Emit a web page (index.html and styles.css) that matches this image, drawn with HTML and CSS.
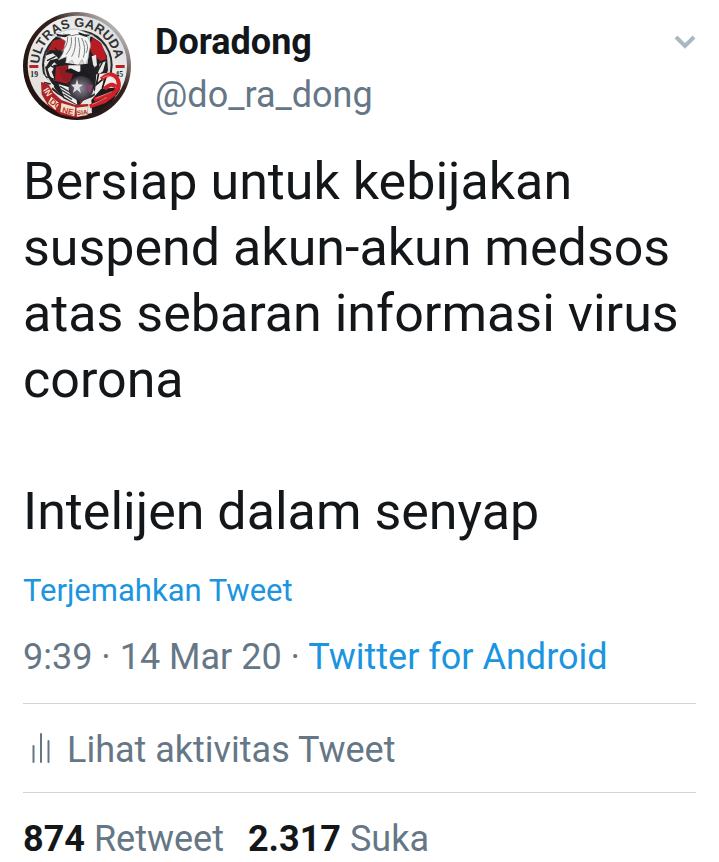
FILE: index.html
```html
<!DOCTYPE html>
<html lang="id">
<head>
<meta charset="utf-8">
<meta name="viewport" content="width=device-width, initial-scale=1">
<title>Tweet</title>
<link rel="stylesheet" href="styles.css">
</head>
<body>
<article class="tweet">
  <header class="header">
    <svg class="avatar" viewBox="24 21 324 324" role="img" aria-label="Doradong">
      <defs>
        <linearGradient id="rim" x1="0" y1="1" x2="1" y2="0">
          <stop offset="0" stop-color="#1c0f0d"/>
          <stop offset=".62" stop-color="#33211e"/>
          <stop offset=".85" stop-color="#b5b0ae"/>
          <stop offset="1" stop-color="#f2f2f2"/>
        </linearGradient>
        <linearGradient id="ring" x1="0" y1="1" x2="1" y2="0">
          <stop offset="0" stop-color="#dedbd5"/>
          <stop offset=".6" stop-color="#efeeec"/>
          <stop offset="1" stop-color="#d4d6d7"/>
        </linearGradient>
        <radialGradient id="ball">
          <stop offset="0" stop-color="#8b8790"/>
          <stop offset="1" stop-color="#35313a"/>
        </radialGradient>
        <path id="arc-top" d="M73 180A114 114 0 0 1 301 180"/>
      </defs>
      <circle cx="186" cy="183" r="162" fill="url(#rim)"/>
      <circle cx="187" cy="181" r="149" fill="url(#ring)"/>
      <circle cx="187" cy="180" r="106" fill="#29292b"/>
      <circle cx="187" cy="180" r="100" fill="#d5d6d5"/>
      <text class="badge-title" fill="#303236"><textPath href="#arc-top" startOffset="3">ULTRAS GARUDA</textPath></text>
      <path fill="#b92325" d="M43 180h27v9H43zM302 180h27v9h-27z"/>
      <text class="badge-year" x="46" y="215">19</text>
      <text class="badge-year" x="301" y="215">45</text>
      <!-- wings -->
      <path fill="#222225" d="M150 80l-35 23-18 32-10 37 9 39 26 43 21 21 20-75-10-42 12-44zM226 92l29 19 21 42 3 43-15 40-27 23-21-64z"/>
      <path fill="#ad1f23" d="M113 107l33-7 11 12-14 25-37-2-10 8z"/>
      <path fill="#b81c22" d="M233 98l26 17 17 46-19 7-25-21-9-20z"/>
      <path fill="#e9e9e8" d="M94 151l20-6 16 15-25 6-13 21-5-12zM98 192l20-20 8 7-16 21 12 31-17-18zM85 206l13 18 20 18-11 12-20-20zM230 154l13-5 3 32-10 8zM254 176l18-7-8 30-16 11z"/>
      <path fill="none" stroke="#242426" stroke-width="4" d="M96 167l26-13M92 215l27 8M87 232l20 5M119 128l18 21M262 172l-16 30M106 181l17 10"/>
      <!-- head feathers -->
      <path fill="#f4f4f4" stroke="#a4a7a9" stroke-width="2" d="M112 91l30-12 20-6 25-1 21 9 28 11-18 5q14 18 5 38l-4 25-9 23-9-20-17 26-13-24-20 17 4-27-25 10q17-19 17-34l5-23-18-11z"/>
      <path fill="none" stroke="#7c8084" stroke-width="3" d="M158 95q1 29-19 44M169 97q4 30-16 52M181 96q3 36-11 59M190 98q9 30 1 60M200 99q15 29 5 59M210 106q14 20 3 38M144 87l26 5 25-5"/>
      <path fill="#242426" d="M123 86l25 4 20-3-17 10-24-3zM190 81l19 7 19 1-14 7-21-7z"/>
      <!-- quartered shield -->
      <path fill="#202024" d="M115 180l39-6 35 5 29-3 20 7-6 67-40 54-47-24-27-44z"/>
      <path fill="#a51d24" d="M123 185l35-5 1 56-39-9zM190 233h43l-5 28-33 37z"/>
      <path fill="#f0efed" d="M160 181h36v24h-36zM131 238l48 13 8 48-39-23z"/>
      <path fill="#1c1b20" d="M143 199l24-9 23 11 19-6 16 15-10 17-39 7-30-9z"/>
      <path fill="#8f1b23" d="M129 187h23v14l22 5-8 26-23-7z"/>
      <path stroke="#393a3d" stroke-width="4" d="M135 244l37 22M137 254l37 22M145 267l26 16"/>
      <circle cx="198" cy="250" r="37" fill="url(#ball)"/>
      <path fill="#dfe0e4" d="M186 222l4 16 14 1-11 9 5 16-12-10-12 10 4-16-10-9 14-1z"/>
      <path fill="#85456d" d="M216 238l18 3-8 22-13-8z"/>
      <!-- lower ribbons -->
      <path fill="#f0eeea" d="M244 208l38-5 27 18-8 48-37 37-28 10z"/>
      <path fill="#1d1819" d="M229 285l29-33 35-4 23 5-25 38-36 27-24 10z"/>
      <path fill="none" stroke="#1d1819" stroke-width="5" d="M251 205l-7 34 26-22-8 37M276 208l-14 40"/>
      <path fill="none" stroke="#d12027" stroke-width="12" d="M259 223q31-29 49 0 13 30-22 46l-49 15M268 252q24-23 35-5M224 304l45-15 31-24"/>
      <path fill="none" stroke="#f0b4ac" stroke-width="2" d="M263 219q20-15 33 4M244 279l46-19M232 298l43-20"/>
      <path fill="#aa2328" d="M78 231l22 6 14 25 25 23 40 14 41-2-2 34-36 7-44-9-38-27-20-34z"/>
      <path fill="#eee3cd" d="M109 275l24 20-12 20-22-20zM139 294l42 12-3 28-42-13zM184 308l35-4-2 26-31 5z"/>
      <text class="badge-country" fill="#f6e5d6" transform="translate(84 255) rotate(58)">IN</text>
      <text class="badge-country" fill="#b92c26" transform="translate(102 293) rotate(38)">DO</text>
      <text class="badge-country" fill="#c8342d" transform="translate(140 323) rotate(12)">NE</text>
      <text class="badge-sia" transform="translate(186 330) rotate(-4)">SIA</text>
    </svg>
    <div class="author">
      <a class="name" href="#">Doradong</a>
      <a class="handle" href="#">@do_ra_dong</a>
    </div>
    <button class="menu" type="button" aria-label="Menu">
      <svg class="chevron" viewBox="0 0 22 14" aria-hidden="true"><path d="M2 2l9 9 9-9"/></svg>
    </button>
  </header>
  <p class="body">Bersiap untuk kebijakan suspend akun-akun medsos atas sebaran informasi virus corona</p>
  <p class="body">Intelijen dalam senyap</p>
  <a class="translate" href="#">Terjemahkan Tweet</a>
  <div class="meta"><time datetime="2020-03-14T09:39">9:39 · 14 Mar 20</time> · <a href="#">Twitter for Android</a></div>
  <a class="activity" href="#">
    <svg class="bars" viewBox="0 0 20 32" aria-hidden="true"><path d="M2.5 14v16M10 2v28M17.500 9v21"/></svg>
    <span>Lihat aktivitas Tweet</span>
  </a>
  <footer class="stats">
    <a href="#"><strong>874</strong> Retweet</a>
    <a href="#"><strong>2.317</strong> Suka</a>
  </footer>
</article>
</body>
</html>
```
FILE: styles.css
```css
* { box-sizing: border-box; }
body {
  margin: 0;
  background: #fff;
  color: #14171a;
  font-family: Roboto, "Liberation Sans", sans-serif;
}
a { color: #1b95e0; text-decoration: none; }
.tweet { padding: 12px 23px 0; }
.header { display: flex; align-items: flex-start; margin-bottom: 28px; }
.avatar { width: 108px; height: 108px; flex: none; }
.author { display: flex; flex-direction: column; flex: 1; margin-left: 24px; padding-top: 3px; }
.name { color: #14171a; font-size: 36px; line-height: 54px; font-weight: 700; }
.handle { color: #657786; font-size: 36px; line-height: 52px; }
.menu { border: 0; padding: 0; margin-top: 23px; background: none; }
.chevron { display: block; width: 22px; height: 14px; fill: none; stroke: #aab8c2; stroke-width: 4; }
.body { margin: 0 0 66px; font-size: 52px; line-height: 66px; }
.body + .body { margin-bottom: 24px; }
.translate { display: block; font-size: 31px; line-height: 44px; }
.meta { margin-top: 20px; color: #657786; font-size: 36px; line-height: 48px; }
.activity {
  display: flex;
  align-items: center;
  gap: 16px;
  margin-top: 22px;
  padding-left: 8px;
  border-top: 1px solid #ccd6dd;
  border-bottom: 1px solid #ccd6dd;
  color: #657786;
  font-size: 36px;
  line-height: 84px;
}
.activity span { padding-top: 4px; }
.bars { width: 20px; height: 32px; fill: none; stroke: #657786; stroke-width: 2; stroke-linecap: round; }
.stats { display: flex; gap: 24px; padding-top: 22px; font-size: 36px; line-height: 48px; }
.stats a { color: #657786; }
.stats strong { color: #14171a; font-weight: 700; }
.badge-title { font: 700 39px "Liberation Sans", sans-serif; }
.badge-year { font: 700 23px "Liberation Serif", serif; fill: #222; }
.badge-country { font: 700 25px "Liberation Sans", sans-serif; }
.badge-sia { font: 700 19px "Liberation Sans", sans-serif; fill: #a92727; }
```
